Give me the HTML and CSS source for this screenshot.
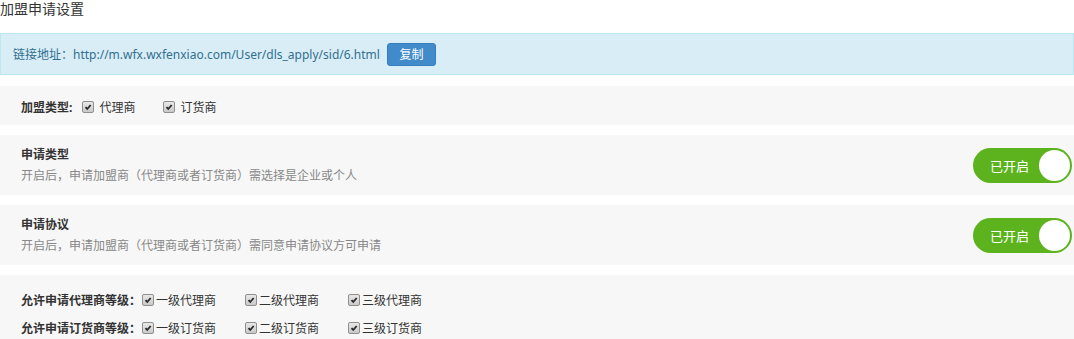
FILE: index.html
```html
<!DOCTYPE html>
<html>
<head>
  <title>加盟申请设置</title>
  <meta charset="utf-8">
  <link rel="stylesheet" href="styles.css">
</head>
<body>
  <h3 class="page-title">加盟申请设置</h3>

  <div class="alert">
    <span>链接地址：http://m.wfx.wxfenxiao.com/User/dls_apply/sid/6.html</span>
    <button class="btn-copy">复制</button>
  </div>

  <div class="section join-type">
    <span class="label">加盟类型:</span>
    <label class="opt"><span class="check"><svg viewBox="0 0 12 12"><path d="M3 6.2 L5.1 8.4 L9.2 3.6" /></svg></span>代理商</label>
    <label class="opt"><span class="check"><svg viewBox="0 0 12 12"><path d="M3 6.2 L5.1 8.4 L9.2 3.6" /></svg></span>订货商</label>
  </div>

  <div class="section switch-row">
    <div class="info">
      <h4>申请类型</h4>
      <p>开启后，申请加盟商（代理商或者订货商）需选择是企业或个人</p>
    </div>
    <div class="toggle"><span>已开启</span><i class="knob"></i></div>
  </div>

  <div class="section switch-row">
    <div class="info">
      <h4>申请协议</h4>
      <p>开启后，申请加盟商（代理商或者订货商）需同意申请协议方可申请</p>
    </div>
    <div class="toggle"><span>已开启</span><i class="knob"></i></div>
  </div>

  <div class="section levels">
    <div class="level-row">
      <span class="label">允许申请代理商等级：</span>
      <label class="lv"><span class="check"><svg viewBox="0 0 12 12"><path d="M3 6.2 L5.1 8.4 L9.2 3.6" /></svg></span>一级代理商</label>
      <label class="lv"><span class="check"><svg viewBox="0 0 12 12"><path d="M3 6.2 L5.1 8.4 L9.2 3.6" /></svg></span>二级代理商</label>
      <label class="lv"><span class="check"><svg viewBox="0 0 12 12"><path d="M3 6.2 L5.1 8.4 L9.2 3.6" /></svg></span>三级代理商</label>
    </div>
    <div class="level-row">
      <span class="label">允许申请订货商等级：</span>
      <label class="lv"><span class="check"><svg viewBox="0 0 12 12"><path d="M3 6.2 L5.1 8.4 L9.2 3.6" /></svg></span>一级订货商</label>
      <label class="lv"><span class="check"><svg viewBox="0 0 12 12"><path d="M3 6.2 L5.1 8.4 L9.2 3.6" /></svg></span>二级订货商</label>
      <label class="lv"><span class="check"><svg viewBox="0 0 12 12"><path d="M3 6.2 L5.1 8.4 L9.2 3.6" /></svg></span>三级订货商</label>
    </div>
  </div>
</body>
</html>
```

FILE: styles.css
```css
* {
  box-sizing: border-box;
}

body {
  margin: 0;
  font-family: "Noto Sans", "Noto Sans CJK SC", sans-serif;
  font-size: 12px;
  color: #333;
  background-color: #fff;
}

.page-title {
  margin: 0 0 13px;
  font-size: 14px;
  font-weight: normal;
  line-height: 18px;
  height: 20px;
}

/* link box */
.alert {
  display: flex;
  align-items: center;
  gap: 7px;
  height: 42px;
  padding: 0 12px;
  margin-bottom: 11px;
  background-color: #d9edf7;
  border: 1px solid #bce8f1;
  color: #31708f;
}

.btn-copy {
  height: 23px;
  width: 49px;
  padding: 0;
  border: 1px solid #357ebd;
  border-radius: 3px;
  background-color: #428bca;
  color: #fff;
  font-family: inherit;
  font-size: 12px;
}

.section {
  background-color: #f7f7f7;
  margin-bottom: 10px;
  padding: 0 2px 0 21px;
}

.label {
  font-weight: bold;
}

/* fake checkbox */
.check {
  display: inline-block;
  width: 12px;
  height: 12px;
  border: 1px solid #8f8f8f;
  border-radius: 2px;
  background: linear-gradient(#e8e8e8, #c9c9c9);
  flex-shrink: 0;
}

.check svg {
  display: block;
  width: 10px;
  height: 10px;
}

.check path {
  fill: none;
  stroke: #2a2a2a;
  stroke-width: 2.2;
}

.join-type {
  display: flex;
  align-items: center;
  height: 39px;
  padding-top: 3px;
}

.join-type .label {
  margin-right: 10px;
}

.join-type .opt {
  display: inline-flex;
  align-items: center;
  gap: 5px;
  width: 81px;
}

.switch-row {
  display: flex;
  align-items: center;
  justify-content: space-between;
  height: 60px;
}

.switch-row h4 {
  margin: 0;
  font-size: 12px;
  line-height: 21px;
}

.switch-row p {
  margin: 0;
  line-height: 21px;
  color: #888;
}

.toggle {
  display: flex;
  align-items: center;
  justify-content: space-between;
  width: 99px;
  height: 35px;
  padding: 0 2px 0 17px;
  border-radius: 18px;
  background-color: #5cb31d;
  color: #fff;
  font-size: 13px;
}

.knob {
  width: 31px;
  height: 31px;
  border-radius: 50%;
  background-color: #fff;
}

.levels {
  padding-top: 15px;
  padding-bottom: 10px;
}

.level-row {
  display: flex;
  align-items: center;
  height: 20px;
  margin-bottom: 8px;
}

.level-row .label {
  width: 121px;
}

.level-row .lv {
  display: inline-flex;
  align-items: center;
  gap: 2px;
  width: 103px;
}
```
